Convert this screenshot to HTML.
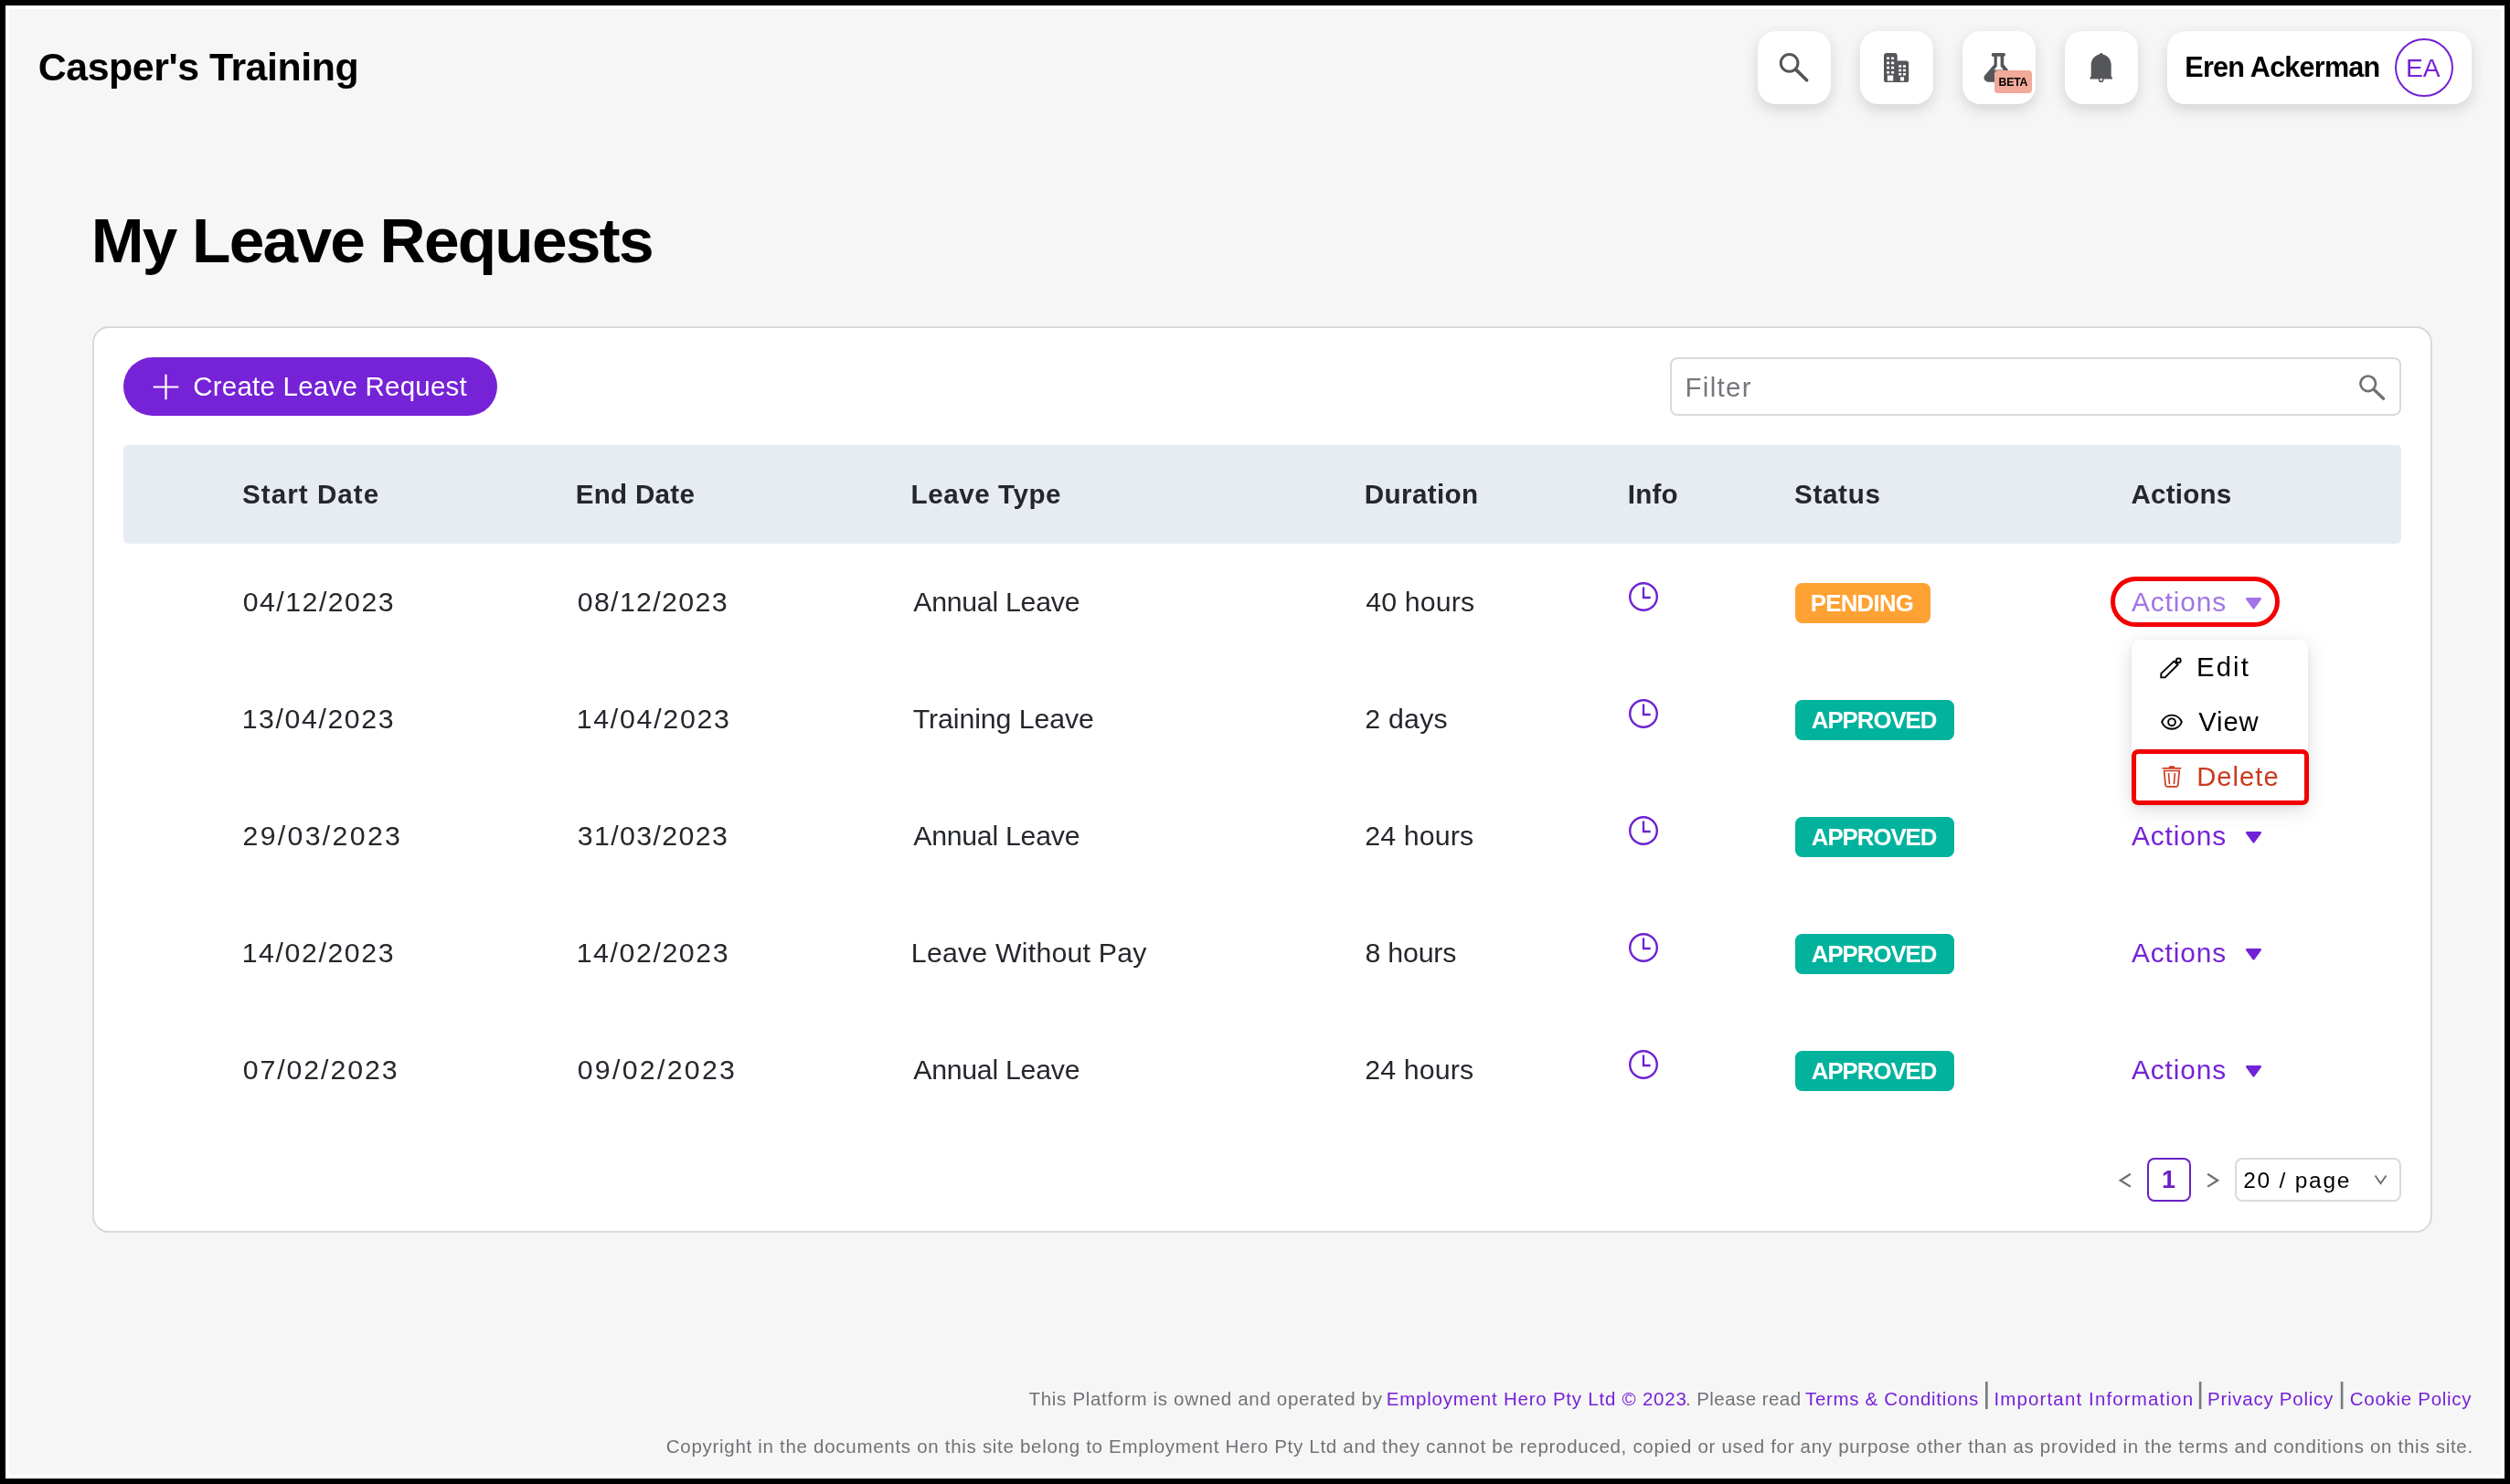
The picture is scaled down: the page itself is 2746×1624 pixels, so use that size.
<!DOCTYPE html>
<html lang="en"><head><meta charset="utf-8"><title>My Leave Requests</title>
<style>
html,body{margin:0;padding:0;background:#000;}
body{width:2746px;height:1624px;font-family:"Liberation Sans",sans-serif;}
#frame{position:absolute;left:0;top:0;width:2746px;height:1624px;background:#000;overflow:hidden;}
#frame div,#frame svg,#frame span{position:absolute;box-sizing:border-box;}
.t{line-height:1;white-space:pre;margin:0;padding:0;}
.white{left:6px;top:6px;width:2734px;height:1612px;background:#fff;}
.page{left:10px;top:10px;width:2726px;height:1604px;background:#f6f6f6;}
.hbtn{top:34px;width:80px;height:80px;border-radius:20px;background:#fff;box-shadow:0 6px 16px rgba(0,0,0,.14);}
.ubtn{left:2371px;top:34px;width:333px;height:80px;border-radius:20px;background:#fff;box-shadow:0 6px 16px rgba(0,0,0,.14);}
.avatar{left:2620px;top:42px;width:64px;height:64px;border-radius:50%;border:2.2px solid #6f22d2;background:#fff;}
.beta{left:2182px;top:76.5px;width:41px;height:25.5px;border-radius:4px;background:#f1a999;}
.card{left:101px;top:356.5px;width:2560px;height:992px;border:2px solid #d9d9dd;border-radius:18px;background:#fff;}
.create{left:135px;top:391px;width:409px;height:64px;border-radius:32px;background:#7622d7;}
.finput{left:1827px;top:391px;width:800px;height:64px;border-radius:8px;border:2px solid #dadadd;background:#fff;}
.thead{left:135px;top:487px;width:2492px;height:108px;border-radius:5px;background:#e7ebf2;}
.badge{left:1964px;height:44px;border-radius:7.5px;}
.pend{width:148px;background:#ffa234;}
.appr{width:174px;background:#01b39d;}
.pill{left:2309px;top:631px;width:185px;height:55px;border-radius:28px;border:5px solid #f30000;}
.dd{left:2332px;top:700px;width:193px;height:181px;border-radius:9px;background:#fff;box-shadow:0 6px 22px rgba(0,0,0,.13),0 2px 6px rgba(0,0,0,.06);}
.delbox{left:2332px;top:820px;width:194px;height:61px;border-radius:7px;border:5px solid #f30000;}
.pg1{left:2349px;top:1267px;width:48px;height:48px;border-radius:8px;border:2.5px solid #6a1fc8;background:#fff;}
.pgsel{left:2445px;top:1267px;width:181.5px;height:48px;border-radius:8px;border:2px solid #dadadd;background:#fff;}
#frame #texts{left:0;top:0;width:2746px;height:1624px;will-change:transform;}

</style></head>
<body>
<div id="frame">
<div class="white"></div><div class="page"></div>
<div class="hbtn" style="left:1923px"></div>
<div class="hbtn" style="left:2035px"></div>
<div class="hbtn" style="left:2147px"></div>
<div class="hbtn" style="left:2259px"></div>
<div class="ubtn"></div><div class="avatar"></div>
<svg style="left:0;top:0" width="2746" height="130" viewBox="0 0 2746 130">
<circle cx="1957.6" cy="68.9" r="9.35" fill="none" stroke="#55565a" stroke-width="3"/>
<line x1="1965.2" y1="76.6" x2="1976.6" y2="87.8" stroke="#55565a" stroke-width="3.7" stroke-linecap="round"/>
<path fill="#55565a" fill-rule="evenodd" d="M2064 58h8.7a3 3 0 0 1 3 3v5.6h9.5a3 3 0 0 1 3 3V88a2 2 0 0 1-2 2H2063a2 2 0 0 1-2-2V61a3 3 0 0 1 3-3zM2064.1 62.5h3v2.6h-3zM2064.1 67.6h3v2.6h-3zM2064.1 72.8h3v2.6h-3zM2064.1 77.9h3v2.6h-3zM2069.1 62.5h3v2.6h-3zM2069.1 67.6h3v2.6h-3zM2069.1 72.8h3v2.6h-3zM2069.1 77.9h3v2.6h-3zM2064.9 82.6h6.3v5.8h-6.3zM2077.2 71.2h3v2.5h-3zM2077.2 75.7h3v2.5h-3zM2077.2 80.1h3v2.5h-3zM2082.0 71.2h3v2.5h-3zM2082.0 75.7h3v2.5h-3zM2082.0 80.1h3v2.5h-3zM2079 84.3h4.1v4.1h-4.1z"/>
<path fill="#55565a" d="M2180 58H2192A1.9 1.9 0 0 1 2192.2 61.8V70.5L2201.5 82.3C2204.2 85.800 2202 89.8 2198 89.8H2175.8C2171.8 89.8 2168.800 85.800 2171.6 82.3L2181.6 70.500V61.8A1.9 1.9 0 0 1 2180 58Z"/>
<path fill="#fff" d="M2184.800 61.800h3.800v10.600l3.300 4h-10.400l3.300-4z"/>
<path fill="#55565a" d="M2298.700 58c0.900 0 1.600 0.600 1.800 1.500c5.300 1 9.200 5.800 9.200 11.500v12.400l1.200 1.700v1.500h-24.400v-1.500l1.200-1.700v-12.400c0-5.700 3.900-10.500 9.200-11.500c0.200-0.900 0.900-1.500 1.800-1.500z"/>
<circle cx="2298.7" cy="87.2" r="2.1" fill="#fff" stroke="#55565a" stroke-width="1.5"/>
</svg>
<div class="beta"></div>
<div class="card"></div>
<div class="create"></div>
<svg style="left:167px;top:409px" width="29" height="29" viewBox="0 0 29 29"><path d="M14.5 0.700v27.600M0.700 14.500h27.600" stroke="#fff" stroke-width="2.2" fill="none"/></svg>
<div class="finput"></div>
<svg style="left:2578px;top:407px" width="34" height="34" viewBox="2578 407 34 34"><circle cx="2590.7" cy="419.800" r="8.300" fill="none" stroke="#6f7176" stroke-width="2.700"/><line x1="2597.300" y1="426.500" x2="2607.600" y2="436.200" stroke="#6f7176" stroke-width="3.300" stroke-linecap="round"/></svg>
<div class="thead"></div>
<svg style="left:1779.5px;top:634.8px" width="36" height="36" viewBox="-18 -18 36 36"><circle r="14.800" fill="none" stroke="#6d21d2" stroke-width="2.400"/><path d="M0 -10.600V1H7.700" fill="none" stroke="#6d21d2" stroke-width="2.300"/></svg>
<div class="badge pend" style="top:638px"></div>
<svg style="left:2455px;top:652px" width="22" height="18" viewBox="2455 652 22 18"><path d="M2458.200 654h14.600a1.200 1.200 0 0 1 1 1.900l-7.300 10a1.300 1.300 0 0 1-2 0l-7.300-10a1.200 1.200 0 0 1 1-1.900z" fill="#a274e8"/></svg>
<svg style="left:1779.5px;top:762.8px" width="36" height="36" viewBox="-18 -18 36 36"><circle r="14.800" fill="none" stroke="#6d21d2" stroke-width="2.400"/><path d="M0 -10.600V1H7.700" fill="none" stroke="#6d21d2" stroke-width="2.300"/></svg>
<div class="badge appr" style="top:766px"></div>
<svg style="left:1779.5px;top:890.8px" width="36" height="36" viewBox="-18 -18 36 36"><circle r="14.800" fill="none" stroke="#6d21d2" stroke-width="2.400"/><path d="M0 -10.600V1H7.700" fill="none" stroke="#6d21d2" stroke-width="2.300"/></svg>
<div class="badge appr" style="top:894px"></div>
<svg style="left:2455px;top:908px" width="22" height="18" viewBox="2455 652 22 18"><path d="M2458.200 654h14.600a1.200 1.200 0 0 1 1 1.900l-7.300 10a1.300 1.300 0 0 1-2 0l-7.300-10a1.200 1.200 0 0 1 1-1.900z" fill="#7122d6"/></svg>
<svg style="left:1779.5px;top:1018.8px" width="36" height="36" viewBox="-18 -18 36 36"><circle r="14.800" fill="none" stroke="#6d21d2" stroke-width="2.400"/><path d="M0 -10.600V1H7.700" fill="none" stroke="#6d21d2" stroke-width="2.300"/></svg>
<div class="badge appr" style="top:1022px"></div>
<svg style="left:2455px;top:1036px" width="22" height="18" viewBox="2455 652 22 18"><path d="M2458.200 654h14.600a1.200 1.200 0 0 1 1 1.900l-7.300 10a1.300 1.300 0 0 1-2 0l-7.300-10a1.200 1.200 0 0 1 1-1.900z" fill="#7122d6"/></svg>
<svg style="left:1779.5px;top:1146.8px" width="36" height="36" viewBox="-18 -18 36 36"><circle r="14.800" fill="none" stroke="#6d21d2" stroke-width="2.400"/><path d="M0 -10.600V1H7.700" fill="none" stroke="#6d21d2" stroke-width="2.300"/></svg>
<div class="badge appr" style="top:1150px"></div>
<svg style="left:2455px;top:1164px" width="22" height="18" viewBox="2455 652 22 18"><path d="M2458.200 654h14.600a1.200 1.200 0 0 1 1 1.900l-7.300 10a1.300 1.300 0 0 1-2 0l-7.300-10a1.200 1.200 0 0 1 1-1.900z" fill="#7122d6"/></svg>
<div class="pill"></div>
<div class="dd"></div>
<svg style="left:2360px;top:716px" width="32" height="30" viewBox="2360 716 32 30"><circle cx="2383.300" cy="722.800" r="2.450" fill="#fff" stroke="#000" stroke-width="1.900"/><path d="M2364.300 741.400v-4.300l14.200-13.600l4 4l-13.900 13.900z" fill="#fff" stroke="#000" stroke-width="1.900" stroke-linejoin="miter"/></svg>
<svg style="left:2360px;top:776px" width="32" height="28" viewBox="2360 776 32 28"><path d="M2365.100 790.200c1.700-4.400 6-7.600 10.900-7.600s9.200 3.200 10.900 7.600c-1.700 4.400-6 7.600-10.900 7.600s-9.200-3.200-10.900-7.600z" fill="none" stroke="#000" stroke-width="1.900" stroke-linejoin="round"/><circle cx="2376" cy="790.300" r="3.900" fill="none" stroke="#000" stroke-width="1.900"/></svg>
<svg style="left:2360px;top:834px" width="32" height="32" viewBox="2360 834 32 32"><path d="M2365.500 840.800h20.800" fill="none" stroke="#cb3a1d" stroke-width="1.700"/><path d="M2372.300 840.200l1.200-2h5l1.200 2z" fill="#cb3a1d"/><path d="M2367.600 843.500h16.700l-1.500 15.700a1.900 1.900 0 0 1-1.900 1.700h-9.900a1.900 1.900 0 0 1-1.900-1.700z" fill="none" stroke="#cb3a1d" stroke-width="1.700" stroke-linejoin="round"/><path d="M2372.500 846l1 12.200M2379.400 846l-1 12.200" fill="none" stroke="#cb3a1d" stroke-width="1.600"/></svg>
<div class="delbox"></div>
<svg style="left:2310px;top:1276px" width="130" height="32" viewBox="2310 1276 130 32"><path d="M2330.800 1284.800l-11 6.900l11 6.900" fill="none" stroke="#6b6d72" stroke-width="2.200"/><path d="M2415.200 1284.800l11 6.900l-11 6.900" fill="none" stroke="#6b6d72" stroke-width="2.200"/></svg>
<div class="pg1"></div><div class="pgsel"></div>
<svg style="left:2594px;top:1282px" width="22" height="18" viewBox="2594 1282 22 18"><path d="M2598.500 1286.500l6 8.600l6-8.600" fill="none" stroke="#6b6d72" stroke-width="1.900"/></svg>
<div id="texts">
<span class="t" id="brand" style="left:41.79px;top:51.89px;font-size:42.9px;font-weight:700;color:#000;letter-spacing:-0.463px;">Casper's Training</span>
<span class="t" id="user" style="left:2390.36px;top:58.10px;font-size:30.6px;font-weight:700;color:#000;letter-spacing:-0.783px;">Eren Ackerman</span>
<span class="t" id="ea" style="left:2631.97px;top:60.04px;font-size:28.3px;font-weight:400;color:#7622d7;letter-spacing:0.027px;">EA</span>
<span class="t" id="beta" style="left:2186.50px;top:83.89px;font-size:12.3px;font-weight:700;color:#000;letter-spacing:-0.219px;">BETA</span>
<span class="t" id="h1" style="left:99.76px;top:229.45px;font-size:69.4px;font-weight:700;color:#000;letter-spacing:-1.768px;">My Leave Requests</span>
<span class="t" id="create" style="left:211.20px;top:408.43px;font-size:29.5px;font-weight:400;color:#fff;letter-spacing:0.230px;">Create Leave Request</span>
<span class="t" id="filter" style="left:1843.57px;top:409.03px;font-size:29.5px;font-weight:400;color:#75777c;letter-spacing:1.289px;">Filter</span>
<span class="t" id="hs" style="left:264.96px;top:525.94px;font-size:29.6px;font-weight:700;color:#24272c;letter-spacing:1.050px;">Start Date</span>
<span class="t" id="he" style="left:629.76px;top:525.94px;font-size:29.6px;font-weight:700;color:#24272c;letter-spacing:0.262px;">End Date</span>
<span class="t" id="hl" style="left:996.52px;top:525.94px;font-size:29.6px;font-weight:700;color:#24272c;letter-spacing:0.554px;">Leave Type</span>
<span class="t" id="hd" style="left:1492.76px;top:525.94px;font-size:29.6px;font-weight:700;color:#24272c;letter-spacing:0.388px;">Duration</span>
<span class="t" id="hi" style="left:1780.75px;top:525.94px;font-size:29.6px;font-weight:700;color:#24272c;letter-spacing:0.204px;">Info</span>
<span class="t" id="hst" style="left:1962.96px;top:525.94px;font-size:29.6px;font-weight:700;color:#24272c;letter-spacing:0.706px;">Status</span>
<span class="t" id="ha" style="left:2331.45px;top:525.94px;font-size:29.6px;font-weight:700;color:#24272c;letter-spacing:0.221px;">Actions</span>
<span class="t" id="r0s" style="left:265.73px;top:643.65px;font-size:30.3px;font-weight:400;color:#24272c;letter-spacing:1.471px;">04/12/2023</span>
<span class="t" id="r0e" style="left:631.73px;top:643.65px;font-size:30.3px;font-weight:400;color:#24272c;letter-spacing:1.352px;">08/12/2023</span>
<span class="t" id="r0l" style="left:999.21px;top:643.65px;font-size:30.3px;font-weight:400;color:#24272c;letter-spacing:-0.273px;">Annual Leave</span>
<span class="t" id="r0d" style="left:1494.15px;top:643.65px;font-size:30.3px;font-weight:400;color:#24272c;letter-spacing:0.172px;">40 hours</span>
<span class="t" id="r0b" style="left:1980.77px;top:648.26px;font-size:25.8px;font-weight:700;color:#fff;letter-spacing:-0.736px;">PENDING</span>
<span class="t" id="r0a" style="left:2332.06px;top:643.67px;font-size:29.8px;font-weight:400;color:#a274e8;letter-spacing:0.900px;">Actions</span>
<span class="t" id="r1s" style="left:264.70px;top:771.65px;font-size:30.3px;font-weight:400;color:#24272c;letter-spacing:1.585px;">13/04/2023</span>
<span class="t" id="r1e" style="left:630.70px;top:771.65px;font-size:30.3px;font-weight:400;color:#24272c;letter-spacing:1.734px;">14/04/2023</span>
<span class="t" id="r1l" style="left:998.73px;top:771.65px;font-size:30.3px;font-weight:400;color:#24272c;letter-spacing:-0.090px;">Training Leave</span>
<span class="t" id="r1d" style="left:1493.34px;top:771.65px;font-size:30.3px;font-weight:400;color:#24272c;letter-spacing:0.209px;">2 days</span>
<span class="t" id="r1b" style="left:1981.86px;top:776.26px;font-size:25.8px;font-weight:700;color:#fff;letter-spacing:-1.038px;">APPROVED</span>
<span class="t" id="r2s" style="left:265.49px;top:899.65px;font-size:30.3px;font-weight:400;color:#24272c;letter-spacing:2.313px;">29/03/2023</span>
<span class="t" id="r2e" style="left:631.68px;top:899.65px;font-size:30.3px;font-weight:400;color:#24272c;letter-spacing:1.403px;">31/03/2023</span>
<span class="t" id="r2l" style="left:999.21px;top:899.65px;font-size:30.3px;font-weight:400;color:#24272c;letter-spacing:-0.273px;">Annual Leave</span>
<span class="t" id="r2d" style="left:1493.34px;top:899.65px;font-size:30.3px;font-weight:400;color:#24272c;letter-spacing:0.118px;">24 hours</span>
<span class="t" id="r2b" style="left:1981.86px;top:904.26px;font-size:25.8px;font-weight:700;color:#fff;letter-spacing:-1.038px;">APPROVED</span>
<span class="t" id="r2a" style="left:2332.02px;top:899.67px;font-size:29.8px;font-weight:400;color:#7622d7;letter-spacing:0.912px;">Actions</span>
<span class="t" id="r3s" style="left:264.70px;top:1027.65px;font-size:30.3px;font-weight:400;color:#24272c;letter-spacing:1.585px;">14/02/2023</span>
<span class="t" id="r3e" style="left:630.70px;top:1027.65px;font-size:30.3px;font-weight:400;color:#24272c;letter-spacing:1.585px;">14/02/2023</span>
<span class="t" id="r3l" style="left:996.87px;top:1027.65px;font-size:30.3px;font-weight:400;color:#24272c;letter-spacing:0.203px;">Leave Without Pay</span>
<span class="t" id="r3d" style="left:1493.53px;top:1027.65px;font-size:30.3px;font-weight:400;color:#24272c;letter-spacing:-0.214px;">8 hours</span>
<span class="t" id="r3b" style="left:1981.86px;top:1032.26px;font-size:25.8px;font-weight:700;color:#fff;letter-spacing:-1.038px;">APPROVED</span>
<span class="t" id="r3a" style="left:2332.02px;top:1027.67px;font-size:29.8px;font-weight:400;color:#7622d7;letter-spacing:0.912px;">Actions</span>
<span class="t" id="r4s" style="left:265.73px;top:1155.65px;font-size:30.3px;font-weight:400;color:#24272c;letter-spacing:1.916px;">07/02/2023</span>
<span class="t" id="r4e" style="left:631.73px;top:1155.65px;font-size:30.3px;font-weight:400;color:#24272c;letter-spacing:2.287px;">09/02/2023</span>
<span class="t" id="r4l" style="left:999.21px;top:1155.65px;font-size:30.3px;font-weight:400;color:#24272c;letter-spacing:-0.273px;">Annual Leave</span>
<span class="t" id="r4d" style="left:1493.34px;top:1155.65px;font-size:30.3px;font-weight:400;color:#24272c;letter-spacing:0.118px;">24 hours</span>
<span class="t" id="r4b" style="left:1981.86px;top:1160.26px;font-size:25.8px;font-weight:700;color:#fff;letter-spacing:-1.038px;">APPROVED</span>
<span class="t" id="r4a" style="left:2332.02px;top:1155.67px;font-size:29.8px;font-weight:400;color:#7622d7;letter-spacing:0.912px;">Actions</span>
<span class="t" id="dd_edit" style="left:2403.11px;top:715.98px;font-size:29.2px;font-weight:400;color:#000;letter-spacing:2.132px;">Edit</span>
<span class="t" id="dd_view" style="left:2405.34px;top:776.18px;font-size:29.2px;font-weight:400;color:#000;letter-spacing:0.833px;">View</span>
<span class="t" id="dd_del" style="left:2403.19px;top:836.28px;font-size:29.2px;font-weight:400;color:#cb3a1d;letter-spacing:1.037px;">Delete</span>
<span class="t" id="pg1" style="left:2365.01px;top:1278.14px;font-size:27px;font-weight:700;color:#6a1fc8;letter-spacing:0.000px;">1</span>
<span class="t" id="pgsz" style="left:2454.20px;top:1280.26px;font-size:24.5px;font-weight:400;color:#000;letter-spacing:1.754px;">20 / page</span>
<span class="t" id="f1a" style="left:1125.59px;top:1521.35px;font-size:20.5px;font-weight:400;color:#707277;letter-spacing:0.679px;">This Platform is owned and operated by</span>
<span class="t" id="f1b" style="left:1516.84px;top:1521.35px;font-size:20.5px;font-weight:400;color:#7622d7;letter-spacing:0.771px;">Employment Hero Pty Ltd © 2023</span>
<span class="t" id="f1c" style="left:1843.97px;top:1521.35px;font-size:20.5px;font-weight:400;color:#707277;letter-spacing:0.441px;">. Please read</span>
<span class="t" id="f1d" style="left:1975.03px;top:1521.35px;font-size:20.5px;font-weight:400;color:#7622d7;letter-spacing:0.681px;">Terms &amp; Conditions</span>
<span class="t" id="f1e" style="left:2169.37px;top:1509.34px;font-size:31.5px;font-weight:400;color:#77797e;letter-spacing:0.000px;">|</span>
<span class="t" id="f1f" style="left:2181.44px;top:1521.35px;font-size:20.5px;font-weight:400;color:#7622d7;letter-spacing:1.138px;">Important Information</span>
<span class="t" id="f1g" style="left:2402.93px;top:1509.34px;font-size:31.5px;font-weight:400;color:#77797e;letter-spacing:0.000px;">|</span>
<span class="t" id="f1h" style="left:2415.09px;top:1521.35px;font-size:20.5px;font-weight:400;color:#7622d7;letter-spacing:0.736px;">Privacy Policy</span>
<span class="t" id="f1i" style="left:2557.89px;top:1509.34px;font-size:31.5px;font-weight:400;color:#77797e;letter-spacing:0.000px;">|</span>
<span class="t" id="f1j" style="left:2570.82px;top:1521.35px;font-size:20.5px;font-weight:400;color:#7622d7;letter-spacing:0.715px;">Cookie Policy</span>
<span class="t" id="f2" style="left:728.83px;top:1573.25px;font-size:20.5px;font-weight:400;color:#707277;letter-spacing:0.706px;">Copyright in the documents on this site belong to Employment Hero Pty Ltd and they cannot be reproduced, copied or used for any purpose other than as provided in the terms and conditions on this site.</span>
</div>
</div>
</body></html>
